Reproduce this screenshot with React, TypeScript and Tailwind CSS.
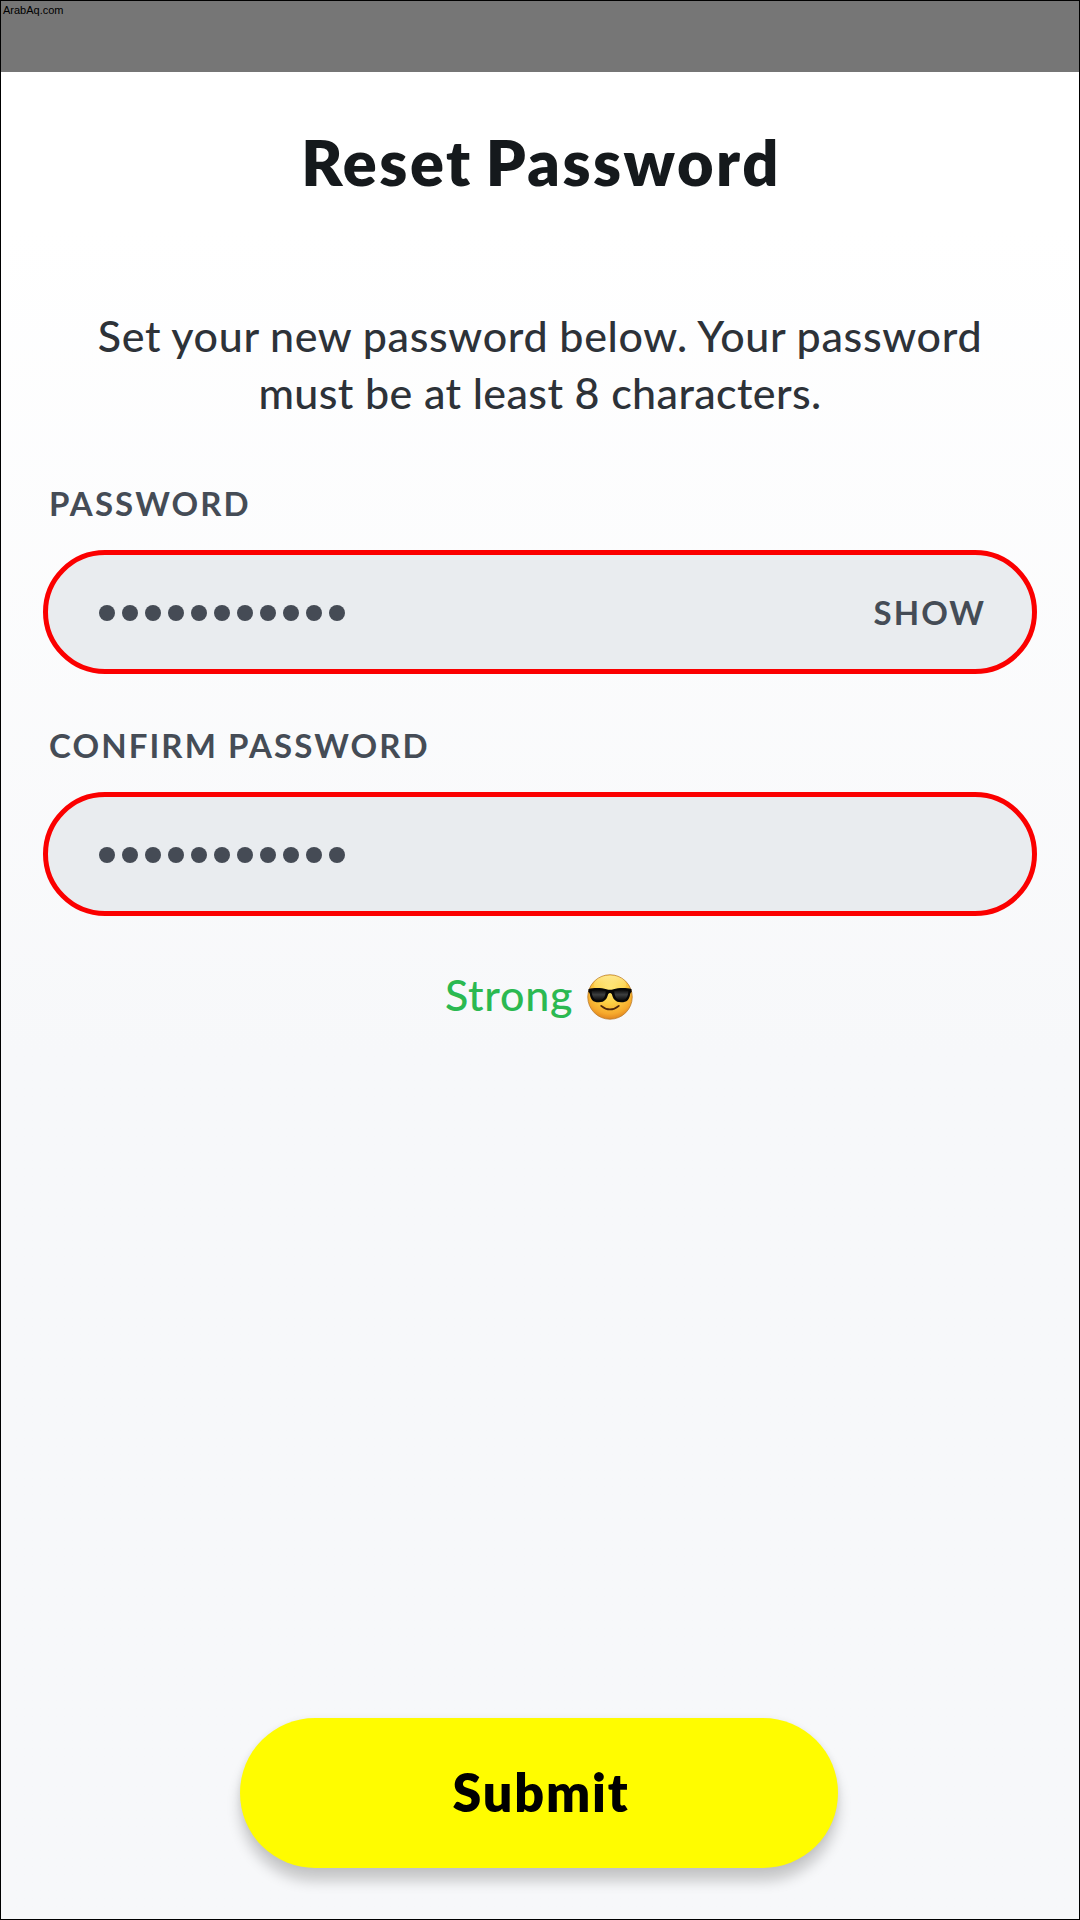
import { useState } from "react";

const PASSWORD_LENGTH = 11;

function SunglassesEmoji() {
  return (
    <svg viewBox="0 0 60 60" className="mt-[3px] h-[46px] w-[46px]" role="img" aria-label="Cool">
      <defs>
        <radialGradient id="face" cx="0.5" cy="0.32" r="0.7">
          <stop offset="0" stopColor="#ffe673" />
          <stop offset="0.45" stopColor="#fdd044" />
          <stop offset="0.8" stopColor="#f6a92c" />
          <stop offset="1" stopColor="#dd7f1c" />
        </radialGradient>
        <linearGradient id="shine" x1="0" y1="0" x2="0" y2="1">
          <stop offset="0" stopColor="#fff6c0" stopOpacity="0.6" />
          <stop offset="1" stopColor="#ffe673" stopOpacity="0" />
        </linearGradient>
        <linearGradient id="lens" x1="0" y1="0" x2="0" y2="1">
          <stop offset="0" stopColor="#0b0b0b" />
          <stop offset="0.45" stopColor="#3d3f40" />
          <stop offset="1" stopColor="#0a0a0a" />
        </linearGradient>
      </defs>
      <circle cx="30" cy="30" r="29" fill="url(#face)" stroke="#b9792a" strokeWidth="1" />
      <ellipse cx="30" cy="14" rx="21" ry="12" fill="url(#shine)" />
      {/* frame and lenses */}
      <path
        d="M2 19.5C9 17.6 19 17.8 25.5 19.8Q30 21.2 34.5 19.8C41 17.8 51 17.6 58 19.5L58.3 23.5Q56.8 24 56.3 26C55.3 33 52.5 37 44.5 37C36.5 37 33.8 32 32.5 26.5Q30 22.8 27.5 26.5C26.2 32 23.5 37 15.5 37C7.5 37 4.7 33 3.7 26Q3.2 24 1.7 23.5Z"
        fill="#070707"
      />
      <path d="M6 22Q15 19.5 24.5 22.5C24 30 21 34.5 15.5 34.5C9 34.5 6.5 30 6 22Z" fill="url(#lens)" />
      <path d="M54 22Q45 19.5 35.5 22.5C36 30 39 34.5 44.5 34.5C51 34.5 53.5 30 54 22Z" fill="url(#lens)" />
      <path d="M18.5 41.5Q30 51 41.5 41.5" fill="none" stroke="#4c260b" strokeWidth="2.3" strokeLinecap="round" />
    </svg>
  );
}

function PasswordDots() {
  return (
    <div className="flex gap-[7px] pt-0.5">
      {Array.from({ length: PASSWORD_LENGTH }, (_, i) => (
        <span key={i} className="h-4 w-4 rounded-full bg-[#454b55]"></span>
      ))}
    </div>
  );
}

function PasswordField({
  label,
  action,
  onAction,
}: {
  label: string;
  action?: string;
  onAction?: () => void;
}) {
  return (
    <div>
      <div className="pl-1.5 text-[33px] leading-10 font-bold tracking-[2.1px] text-[#454c56]">
        {label}
      </div>
      <div className="mt-[27px] flex h-[124px] items-center justify-between rounded-[62px] border-5 border-[#fb0000] bg-[#e9ecef] pr-[46px] pl-[51px]">
        <PasswordDots />
        {action && (
          <button
            type="button"
            onClick={onAction}
            className="pb-px text-[33px] leading-10 font-bold tracking-[2px] text-[#454c56]"
          >
            {action}
          </button>
        )}
      </div>
    </div>
  );
}

export default function App() {
  const [, setVisible] = useState(false);

  return (
    <div className="flex h-[1920px] w-[1080px] flex-col border border-black bg-linear-to-b from-white from-12% via-[#f7f8fa] via-55% to-[#f7f8fa] font-['Lato',sans-serif]">
      {/* Status bar */}
      <div className="h-[71px] shrink-0 bg-[#767676] pt-[3px] pl-0.5 font-['Liberation_Sans',sans-serif] text-[11px] leading-[13px] text-black">
        ArabAq.com
      </div>

      <h1 className="mt-[50px] pl-0.5 text-center text-[63px] leading-[80px] font-extrabold tracking-[2.5px] [word-spacing:-4px] text-[#15191c]">
        Reset Password
      </h1>

      <p className="mt-[105px] text-center text-[43px] leading-[57px] font-medium text-[#2d3238]">
        <span className="block tracking-[0.67px] [word-spacing:-0.5px]">
          Set your new password below. Your password
        </span>
        <span className="block tracking-[0.38px]">must be at least 8 characters.</span>
      </p>

      <div className="mt-[62px] flex flex-col gap-[51px] pr-[42px] pl-[42px]">
        <PasswordField label="PASSWORD" action="SHOW" onAction={() => setVisible((v) => !v)} />
        <PasswordField label="CONFIRM PASSWORD" />
      </div>

      <div className="mt-[49px] mr-0.5 flex h-[60px] items-center justify-center gap-[14px] text-[43px] font-medium tracking-[0.7px] text-[#2bb951]">
        <span>Strong</span>
        <SunglassesEmoji />
      </div>

      <div className="mt-auto mb-[51px] flex justify-center">
        <button
          type="button"
          className="mr-0.5 h-[150px] w-[598px] rounded-full bg-[#fffc00] pb-0.5 pl-1 text-[52px] font-extrabold tracking-[1.8px] text-black shadow-[0_13px_14px_rgba(0,0,0,0.2),0_0_6px_rgba(0,0,0,0.06)]"
        >
          Submit
        </button>
      </div>
    </div>
  );
}
